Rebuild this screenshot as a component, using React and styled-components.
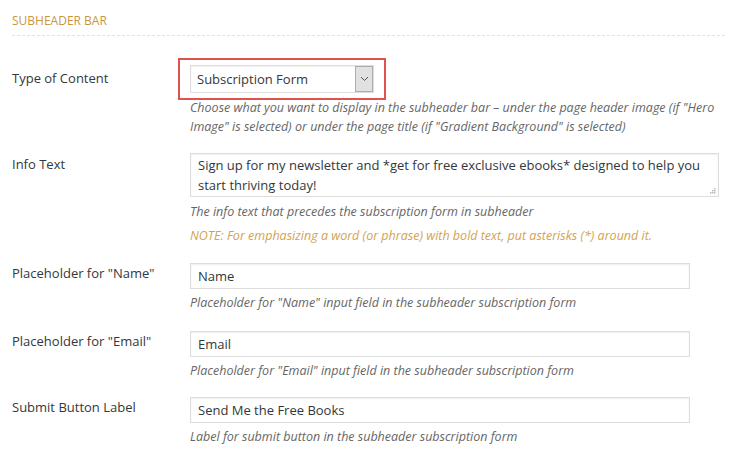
import React from "react";
import styled, { createGlobalStyle } from "styled-components";

const Global = createGlobalStyle`
  html, body { margin: 0; padding: 0; background: #fff; }
  body { font-family: "Open Sans", "Noto Sans", sans-serif; color: #444; }
  * { box-sizing: border-box; }
`;

const Page = styled.div`
  width: 738px;
  height: 460px;
  padding: 13px 13px 0 12px;
  overflow: hidden;
  background: #fff;
`;

const SectionTitle = styled.h3`
  margin: 0;
  padding: 0 0 6px;
  font-size: 12px;
  font-weight: 400;
  color: #c9963f;
  letter-spacing: 0;
  border-bottom: 1px dashed #e2e2e2;
  line-height: 16px;
`;

const Row = styled.div`
  display: grid;
  grid-template-columns: 178px 1fr;
  padding-top: ${(p) => p.$top}px;
`;

const Label = styled.div`
  font-size: 13px;
  color: #33383d;
  line-height: 20px;
  padding-top: ${(p) => p.$top || 0}px;
`;

const Field = styled.div`
  display: flex;
  flex-direction: column;
  align-items: flex-start;
`;

const Highlight = styled.div`
  position: relative;
  &::after {
    content: "";
    position: absolute;
    left: -12px;
    right: -12px;
    top: -7px;
    bottom: -7px;
    border: 2px solid #e0524d;
    pointer-events: none;
  }
`;

const Select = styled.div`
  width: 184px;
  height: 28px;
  border: 1px solid #ddd;
  box-shadow: inset 0 1px 2px rgba(0, 0, 0, 0.07);
  display: flex;
  align-items: center;
  justify-content: space-between;
  font-size: 13px;
  color: #32373c;
  padding-left: 6px;
  background: #fff;
`;

const Arrow = styled.div`
  width: 18px;
  height: 26px;
  background: #e1e1e1;
  border: 1px solid #adadad;
  display: flex;
  align-items: center;
  justify-content: center;
`;

const Desc = styled.p`
  margin: ${(p) => p.$top || 0}px 0 0;
  font-size: 12.5px;
  font-style: italic;
  color: ${(p) => (p.$note ? "#d4a24e" : "#666")};
  line-height: 19px;
`;

const TextArea = styled.div`
  position: relative;
  width: 529px;
  height: 44px;
  border: 1px solid #ddd;
  box-shadow: inset 0 1px 2px rgba(0, 0, 0, 0.07);
  padding: 1px 7px;
  font-size: 13px;
  line-height: 20px;
  color: #32373c;
`;

const Grip = styled.svg`
  position: absolute;
  right: 2px;
  bottom: 2px;
`;

const Input = styled.div`
  width: 500px;
  height: 26px;
  border: 1px solid #ddd;
  box-shadow: inset 0 1px 2px rgba(0, 0, 0, 0.07);
  padding: 0 7px;
  font-size: 13px;
  line-height: 24px;
  color: #32373c;
`;

const inputs = [
  {
    label: 'Placeholder for "Name"',
    value: "Name",
    desc: 'Placeholder for "Name" input field in the subheader subscription form',
    top: 18,
  },
  {
    label: 'Placeholder for "Email"',
    value: "Email",
    desc: 'Placeholder for "Email" input field in the subheader subscription form',
    top: 19,
  },
  {
    label: "Submit Button Label",
    value: "Send Me the Free Books",
    desc: "Label for submit button in the subheader subscription form",
    top: 17,
  },
];

export default function App() {
  return (
    <>
      <Global />
      <Page>
        <SectionTitle>SUBHEADER BAR</SectionTitle>
        <Row $top={29}>
          <Label $top={3}>Type of Content</Label>
          <Field>
            <Highlight>
              <Select>
                Subscription Form
                <Arrow>
                  <svg width="9" height="6" viewBox="0 0 9 6">
                    <path d="M1 1 L4.5 4.5 L8 1" fill="none" stroke="#555" strokeWidth="1" />
                  </svg>
                </Arrow>
              </Select>
            </Highlight>
            <Desc $top={5}>
              Choose what you want to display in the subheader bar – under the page header image (if "Hero
              Image" is selected) or under the page title (if "Gradient Background" is selected)
            </Desc>
          </Field>
        </Row>
        <Row $top={17}>
          <Label $top={1}>Info Text</Label>
          <Field>
            <TextArea>
              Sign up for my newsletter and *get for free exclusive ebooks* designed to help you start
              thriving today!
              <Grip width="7" height="7" viewBox="0 0 7 7">
                <rect x="5" y="1" width="1.5" height="1.5" fill="#bbb" />
                <rect x="3" y="3" width="1.5" height="1.5" fill="#bbb" />
                <rect x="5" y="3" width="1.5" height="1.5" fill="#bbb" />
                <rect x="1" y="5" width="1.5" height="1.5" fill="#bbb" />
                <rect x="3" y="5" width="1.5" height="1.5" fill="#bbb" />
                <rect x="5" y="5" width="1.5" height="1.5" fill="#bbb" />
              </Grip>
            </TextArea>
            <Desc $top={5}>The info text that precedes the subscription form in subheader</Desc>
            <Desc $top={5} $note>
              NOTE: For emphasizing a word (or phrase) with bold text, put asterisks (*) around it.
            </Desc>
          </Field>
        </Row>
        {inputs.map((r) => (
          <Row key={r.label} $top={r.top}>
            <Label $top={0}>{r.label}</Label>
            <Field>
              <Input>{r.value}</Input>
              <Desc $top={4}>{r.desc}</Desc>
            </Field>
          </Row>
        ))}
      </Page>
    </>
  );
}
